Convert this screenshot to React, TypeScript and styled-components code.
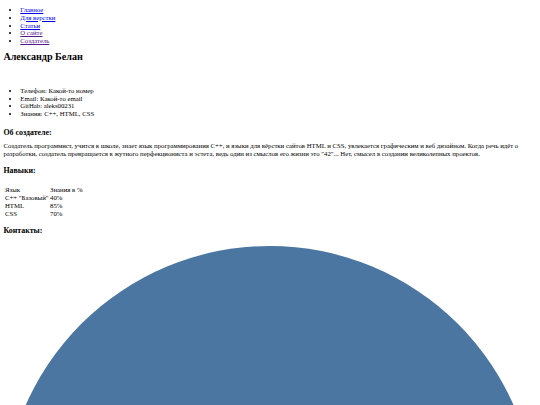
import styled, { createGlobalStyle } from "styled-components"

const GlobalStyle = createGlobalStyle`
  body {
    margin: 0;
    background: #fff;
    color: #000;
    font-family: "Liberation Serif", "Times New Roman", serif;
    font-size: 6.75px;
  }
`

const Page = styled.div`
  padding: 0 3.4px;
  overflow: hidden;
`

const NavList = styled.ul`
  margin: 6px 0 0;
  padding-left: 16.9px;
  line-height: 7.75px;
`

const NavLink = styled.a<{ $visited?: boolean }>`
  color: ${({ $visited }) => ($visited ? "#551a8b" : "#0000ee")};
  text-decoration: underline;
`

const Title = styled.h2`
  font-size: 10.1px;
  line-height: 11.6px;
  font-weight: bold;
  margin: 6.45px 0 0;
`

const InfoList = styled.ul`
  margin: 24.4px 0 0;
  padding-left: 16.9px;
  line-height: 7.6px;
`

const SectionTitle = styled.h3<{ $gap: number }>`
  font-size: 7.9px;
  line-height: 9.1px;
  font-weight: bold;
  margin: ${({ $gap }) => $gap}px 0 0;
`

const Text = styled.p`
  margin: 5px 0 0;
  line-height: 8px;
`

const SkillsTable = styled.table`
  margin: 11.15px 0 0 0.8px;
  border-collapse: collapse;

  td {
    height: 8px;
    padding: 0 0.8px;
    line-height: 8px;
    text-align: left;
    vertical-align: middle;
  }
`

const Avatar = styled.svg`
  display: block;
  width: 100%;
  height: auto;
  margin-top: 10.45px;
`

const links = [
  { label: "Главное", visited: false },
  { label: "Для верстки", visited: false },
  { label: "Статьи", visited: false },
  { label: "О сайте", visited: true },
  { label: "Создатель", visited: true },
]

const info = [
  "Телефон: Какой-то номер",
  "Email: Какой-то email",
  "GitHab: aleks00231",
  "Знания: C++, HTML, CSS",
]

const skills = [
  ["Язык", "Знания в %"],
  ['C++ "Базовый"', "40%"],
  ["HTML", "85%"],
  ["CSS", "70%"],
]

export default function App() {
  return (
    <Page>
      <GlobalStyle />
      <nav>
        <NavList>
          {links.map((l) => (
            <li key={l.label}>
              <NavLink href="#" $visited={l.visited}>
                {l.label}
              </NavLink>
            </li>
          ))}
        </NavList>
      </nav>
      <Title>Александр Белан</Title>
      <InfoList>
        {info.map((i) => (
          <li key={i}>{i}</li>
        ))}
      </InfoList>
      <SectionTitle $gap={10.35}>Об создателе:</SectionTitle>
      <Text>
        Создатель программист, учится в школе, знает язык программирования C++, и
        языки для вёрстки сайтов HTML и CSS, увлекается графическим и веб дизайном.
        Когда речь идёт о разработки, создатель превращается в жутного
        перфекциониста и эстета, ведь один из смыслов его жизни это "42"... Нет,
        смысел в создании великолепных проектов.
      </Text>
      <SectionTitle $gap={8.15}>Навыки:</SectionTitle>
      <SkillsTable>
        <tbody>
          {skills.map((row) => (
            <tr key={row[0]}>
              <td>{row[0]}</td>
              <td>{row[1]}</td>
            </tr>
          ))}
        </tbody>
      </SkillsTable>
      <SectionTitle $gap={8.05}>Контакты:</SectionTitle>
      <Avatar viewBox="0 0 100 100">
        <circle cx="50" cy="50" r="50" fill="#4c76a2" />
      </Avatar>
    </Page>
  )
}
